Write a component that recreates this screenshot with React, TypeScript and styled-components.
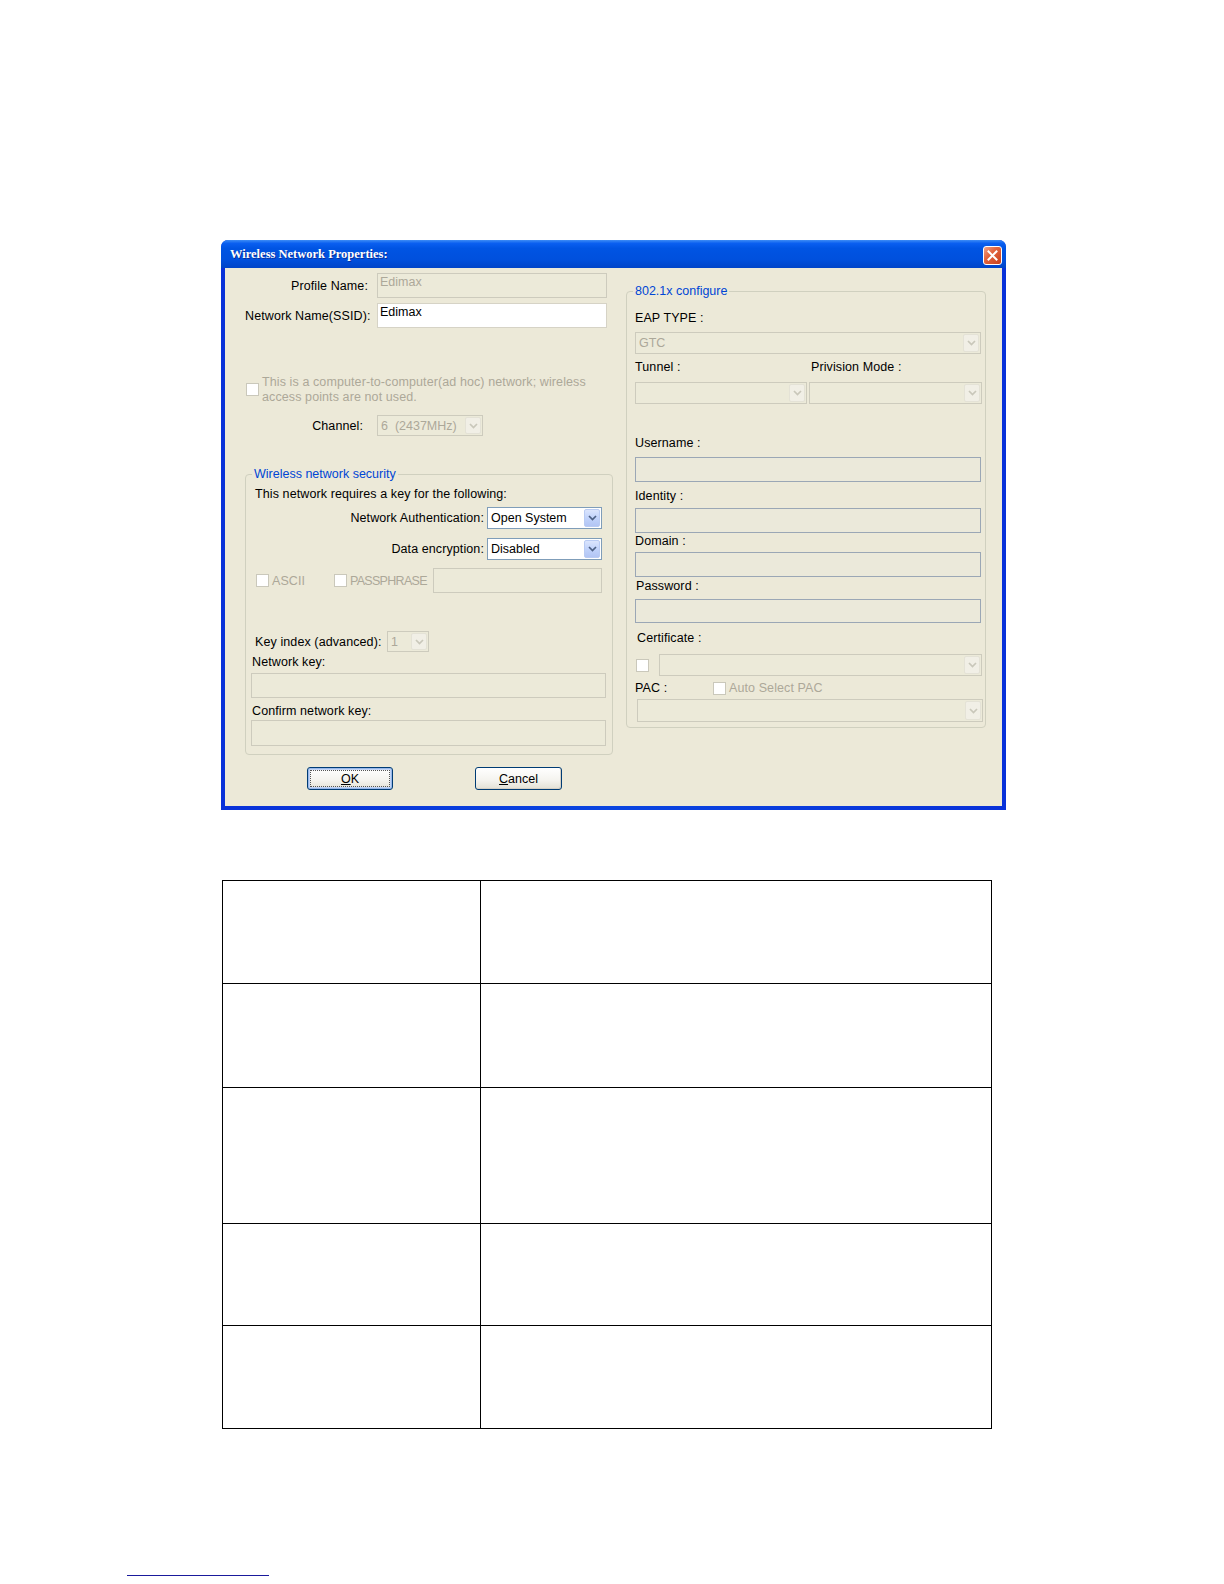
import React from "react";
import styled, { createGlobalStyle } from "styled-components";

const GlobalStyle = createGlobalStyle`
  html, body { margin: 0; padding: 0; background: #ffffff; }
  body { font-family: "Liberation Sans", Arial, sans-serif; }
`;

const Page = styled.div`
  width: 1224px;
  min-height: 1584px;
  display: flex;
  flex-direction: column;
  align-items: flex-start;
  background: #fff;
`;

const Window = styled.div`
  margin: 240px 0 0 221px;
  width: 785px;
  height: 570px;
  box-sizing: border-box;
  display: flex;
  flex-direction: column;
  padding: 0 4px 4px 4px;
  border-radius: 7px 7px 0 0;
  background: linear-gradient(90deg, #0831d9 0%, #0a45e0 50%, #0831d9 100%);
`;

const TitleBar = styled.div`
  height: 28px;
  margin: 0 -4px;
  padding: 0 4px 0 9px;
  display: flex;
  align-items: center;
  justify-content: space-between;
  border-radius: 7px 7px 0 0;
  background: linear-gradient(180deg, #3d8cf5 0%, #0a5ff0 12%, #0054e3 30%, #0050dd 70%, #0044c8 100%);
`;

const TitleText = styled.span`
  font-family: "Liberation Serif", "Times New Roman", serif;
  font-weight: bold;
  font-size: 12.5px;
  color: #ffffff;
  text-shadow: 1px 1px 0 #0a2f9a;
`;

const CloseButton = styled.div`
  width: 19px;
  height: 19px;
  box-sizing: border-box;
  border: 1px solid #ffffff;
  border-radius: 3px;
  background: linear-gradient(135deg, #f0a48a 0%, #e2653f 40%, #c9401c 100%);
  display: flex;
  align-items: center;
  justify-content: center;
  margin-top: 2px;
`;

const Body = styled.div`
  flex: 1;
  background: #ece9d8;
  display: flex;
  padding-left: 20px;
  gap: 13px;
  font-size: 12.5px;
  color: #000;
`;

const LeftCol = styled.div`
  width: 368px;
  display: flex;
  flex-direction: column;
`;

const RightCol = styled.div`
  width: 360px;
  margin-top: 23px;
  display: flex;
  flex-direction: column;
`;

const Row = styled.div<{ $mt?: number; $ml?: number; $pr?: number; $end?: boolean; $align?: string }>`
  display: flex;
  align-items: ${(p) => p.$align || "center"};
  justify-content: ${(p) => (p.$end ? "flex-end" : "flex-start")};
  margin-top: ${(p) => p.$mt || 0}px;
  margin-left: ${(p) => p.$ml || 0}px;
  padding-right: ${(p) => p.$pr || 0}px;
`;

const FieldLabel = styled.span<{ $w?: number; $gap?: number; $right?: boolean }>`
  display: inline-block;
  ${(p) => (p.$w ? `width: ${p.$w}px; flex: none;` : "")}
  text-align: ${(p) => (p.$right ? "right" : "left")};
  margin-right: ${(p) => p.$gap || 0}px;
  line-height: 14px;
  white-space: nowrap;
  letter-spacing: 0.1px;
`;

const Text = styled.div<{ $mt?: number; $ml?: number; $muted?: boolean }>`
  margin-top: ${(p) => p.$mt || 0}px;
  margin-left: ${(p) => p.$ml || 0}px;
  line-height: 14px;
  height: 14px;
  white-space: nowrap;
  letter-spacing: 0.1px;
  color: ${(p) => (p.$muted ? "#aca899" : "#000")};
`;

const AdHocText = styled.div`
  margin-left: 3px;
  line-height: 15px;
  letter-spacing: 0.1px;
  color: #aca899;
`;

type BoxKind = "white" | "disabled" | "blue";

const TextBox = styled.div<{ $w: number; $h: number; $kind: BoxKind; $ml?: number; $mt?: number }>`
  flex: none;
  width: ${(p) => p.$w}px;
  height: ${(p) => p.$h}px;
  margin-left: ${(p) => p.$ml || 0}px;
  margin-top: ${(p) => p.$mt || 0}px;
  box-sizing: border-box;
  padding: 1px 2px;
  line-height: 14px;
  background: ${(p) => (p.$kind === "white" ? "#ffffff" : p.$kind === "blue" ? "#ebe9da" : "#ecead9")};
  border: 1px solid
    ${(p) => (p.$kind === "white" ? "#d6d3c6" : p.$kind === "blue" ? "#9ba7b5" : "#cdcbbd")};
  color: ${(p) => (p.$kind === "disabled" ? "#aca899" : "#000")};
`;

const SelectBox = styled.div<{ $w: number; $h: number; $on?: boolean; $ml?: number; $mt?: number }>`
  flex: none;
  width: ${(p) => p.$w}px;
  height: ${(p) => p.$h}px;
  margin-left: ${(p) => p.$ml || 0}px;
  margin-top: ${(p) => p.$mt || 0}px;
  box-sizing: border-box;
  display: flex;
  align-items: stretch;
  padding: 1px;
  background: ${(p) => (p.$on ? "#ffffff" : "#ecead9")};
  border: 1px solid ${(p) => (p.$on ? "#7f9db9" : "#cdcbbd")};
`;

const SelectValue = styled.span<{ $on?: boolean }>`
  flex: 1;
  display: flex;
  align-items: center;
  padding-left: 2px;
  white-space: pre;
  color: ${(p) => (p.$on ? "#000" : "#aca899")};
  overflow: hidden;
`;

const ArrowBox = styled.span<{ $on?: boolean }>`
  width: 16px;
  flex: none;
  display: flex;
  align-items: center;
  justify-content: center;
  border-radius: 2px;
  background: ${(p) =>
    p.$on ? "linear-gradient(180deg, #dbe5fd 0%, #c1d3fb 50%, #b2c5f4 100%)" : "#f1efe6"};
  border: 1px solid ${(p) => (p.$on ? "#b9cbf3" : "#e4e2d6")};
  box-sizing: border-box;
`;

const Chevron = ({ on }: { on?: boolean }) => (
  <svg width="9" height="6" viewBox="0 0 9 6">
    <polyline
      points="1,1 4.5,4.5 8,1"
      fill="none"
      stroke={on ? "#4d6185" : "#c9c7ba"}
      strokeWidth="1.7"
    />
  </svg>
);

const Select = ({
  w,
  h,
  on,
  value,
  ml,
  mt,
}: {
  w: number;
  h: number;
  on?: boolean;
  value?: string;
  ml?: number;
  mt?: number;
}) => (
  <SelectBox $w={w} $h={h} $on={on} $ml={ml} $mt={mt}>
    <SelectValue $on={on}>{value || ""}</SelectValue>
    <ArrowBox $on={on}>
      <Chevron on={on} />
    </ArrowBox>
  </SelectBox>
);

const Check = styled.span<{ $ml?: number; $mt?: number }>`
  flex: none;
  display: inline-block;
  width: 13px;
  height: 13px;
  box-sizing: border-box;
  margin-left: ${(p) => p.$ml || 0}px;
  margin-top: ${(p) => p.$mt || 0}px;
  background: #ffffff;
  border: 1px solid #cac8bb;
`;

const CheckItem = styled.span<{ $w?: number; $tight?: boolean }>`
  display: inline-flex;
  align-items: center;
  ${(p) => (p.$w ? `width: ${p.$w}px;` : "")}
  flex: none;
  color: #aca899;
  line-height: 14px;
  gap: 3px;
  letter-spacing: ${(p) => (p.$tight ? "-0.7px" : "0.1px")};
`;

const Group = styled.div<{ $mt?: number; $h: number; $w: number }>`
  position: relative;
  margin-top: ${(p) => p.$mt || 0}px;
  width: ${(p) => p.$w}px;
  height: ${(p) => p.$h}px;
  box-sizing: border-box;
  border: 1px solid #d0d0bf;
  border-radius: 4px;
  display: flex;
  flex-direction: column;
`;

const Legend = styled.span`
  position: absolute;
  top: -8px;
  left: 6px;
  padding: 0 2px;
  line-height: 14px;
  background: #ece9d8;
  color: #0046d5;
  white-space: nowrap;
`;

const ButtonRow = styled.div`
  display: flex;
  margin-top: 12px;
  margin-left: 62px;
  gap: 82px;
`;

const XPButton = styled.div<{ $w: number; $default?: boolean }>`
  width: ${(p) => p.$w}px;
  height: 23px;
  box-sizing: border-box;
  border: 1px solid #003c74;
  border-radius: 3px;
  background: linear-gradient(180deg, #ffffff 0%, #f4f3ee 60%, #e3e1d5 100%);
  display: flex;
  align-items: center;
  justify-content: center;
  box-shadow: ${(p) =>
    p.$default ? "inset 0 0 0 1px #98b8ea, inset 0 0 0 2px #c3d5f5" : "inset -1px -1px 0 #d6d0c5"};
  outline: ${(p) => (p.$default ? "1px dotted #555" : "none")};
  outline-offset: -4px;
  line-height: 14px;
`;

const DocTable = styled.table`
  margin: 70px 0 0 222px;
  width: 770px;
  border-collapse: collapse;
`;

const Cell = styled.td<{ $w?: number }>`
  border: 1px solid #000;
  padding: 0;
  ${(p) => (p.$w ? `width: ${p.$w}px;` : "")}
`;

const TableRow = styled.tr<{ $h: number }>`
  height: ${(p) => p.$h}px;
`;

const FooterLink = styled.a`
  display: block;
  margin: 146px 0 0 127px;
  width: 142px;
  height: 0;
  border-bottom: 1px solid #1a1a9c;
`;

const rows = [103, 104, 136, 102, 103];

export default function App() {
  return (
    <Page>
      <GlobalStyle />
      <Window>
        <TitleBar>
          <TitleText>Wireless Network Properties:</TitleText>
          <CloseButton>
            <svg width="11" height="11" viewBox="0 0 11 11">
              <path d="M1.5 1.5 L9.5 9.5 M9.5 1.5 L1.5 9.5" stroke="#fff" strokeWidth="2" strokeLinecap="square" />
            </svg>
          </CloseButton>
        </TitleBar>
        <Body>
          <LeftCol>
            <Row $mt={5}>
              <FieldLabel $w={123} $gap={9} $right>
                Profile Name:
              </FieldLabel>
              <TextBox $w={230} $h={25} $kind="disabled">
                Edimax
              </TextBox>
            </Row>
            <Row $mt={5}>
              <FieldLabel $w={123} $gap={9} $right>
                Network Name(SSID):
              </FieldLabel>
              <TextBox $w={230} $h={25} $kind="white">
                Edimax
              </TextBox>
            </Row>
            <Row $mt={47} $ml={1} $align="flex-start">
              <Check $mt={8} />
              <AdHocText>
                This is a computer-to-computer(ad hoc) network; wireless
                <br />
                access points are not used.
              </AdHocText>
            </Row>
            <Row $mt={10}>
              <FieldLabel $w={118} $gap={14} $right>
                Channel:
              </FieldLabel>
              <Select w={106} h={21} value="6  (2437MHz)" />
            </Row>
            <Group $mt={38} $h={281} $w={368}>
              <Legend>Wireless network security</Legend>
              <Text $mt={12} $ml={9}>
                This network requires a key for the following:
              </Text>
              <Row $mt={6} $end $pr={10}>
                <FieldLabel $gap={3}>Network Authentication:</FieldLabel>
                <Select w={115} h={22} on value="Open System" />
              </Row>
              <Row $mt={9} $end $pr={10}>
                <FieldLabel $gap={3}>Data encryption:</FieldLabel>
                <Select w={115} h={22} on value="Disabled" />
              </Row>
              <Row $mt={8} $ml={10}>
                <CheckItem $w={78}>
                  <Check />
                  ASCII
                </CheckItem>
                <CheckItem $w={99} $tight>
                  <Check />
                  PASSPHRASE
                </CheckItem>
                <TextBox $w={169} $h={25} $kind="disabled" />
              </Row>
              <Row $mt={38} $ml={9}>
                <FieldLabel $w={132}>Key index (advanced):</FieldLabel>
                <Select w={42} h={21} value="1" />
              </Row>
              <Text $mt={3} $ml={6}>
                Network key:
              </Text>
              <TextBox $w={355} $h={25} $kind="disabled" $ml={5} $mt={4} />
              <Text $mt={6} $ml={6}>
                Confirm network key:
              </Text>
              <TextBox $w={355} $h={26} $kind="disabled" $ml={5} $mt={2} />
            </Group>
            <ButtonRow>
              <XPButton $w={86} $default>
                <span>
                  <u>O</u>K
                </span>
              </XPButton>
              <XPButton $w={87}>
                <span>
                  <u>C</u>ancel
                </span>
              </XPButton>
            </ButtonRow>
          </LeftCol>
          <RightCol>
            <Group $h={437} $w={360}>
              <Legend>802.1x configure</Legend>
              <Text $mt={19} $ml={8}>
                EAP TYPE :
              </Text>
              <Select w={346} h={22} value="GTC" ml={8} mt={7} />
              <Row $mt={6} $ml={8}>
                <FieldLabel $w={176}>Tunnel :</FieldLabel>
                <FieldLabel>Privision Mode :</FieldLabel>
              </Row>
              <Row $mt={8} $ml={8}>
                <Select w={172} h={22} />
                <Select w={173} h={22} ml={2} />
              </Row>
              <Text $mt={32} $ml={8}>
                Username :
              </Text>
              <TextBox $w={346} $h={25} $kind="blue" $ml={8} $mt={7} />
              <Text $mt={7} $ml={8}>
                Identity :
              </Text>
              <TextBox $w={346} $h={25} $kind="blue" $ml={8} $mt={5} />
              <Text $mt={1} $ml={8}>
                Domain :
              </Text>
              <TextBox $w={346} $h={25} $kind="blue" $ml={8} $mt={4} />
              <Text $mt={2} $ml={9}>
                Password :
              </Text>
              <TextBox $w={346} $h={24} $kind="blue" $ml={8} $mt={6} />
              <Text $mt={8} $ml={10}>
                Certificate :
              </Text>
              <Row $mt={9} $ml={9}>
                <Check />
                <Select w={323} h={22} ml={10} />
              </Row>
              <Row $mt={5} $ml={8}>
                <FieldLabel $w={78}>PAC :</FieldLabel>
                <CheckItem>
                  <Check />
                  Auto Select PAC
                </CheckItem>
              </Row>
              <Select w={346} h={23} ml={10} mt={4} />
            </Group>
          </RightCol>
        </Body>
      </Window>
      <DocTable>
        <tbody>
          {rows.map((h, i) => (
            <TableRow key={i} $h={h}>
              <Cell $w={257} />
              <Cell />
            </TableRow>
          ))}
        </tbody>
      </DocTable>
      <FooterLink href="#" aria-label="link" />
    </Page>
  );
}
